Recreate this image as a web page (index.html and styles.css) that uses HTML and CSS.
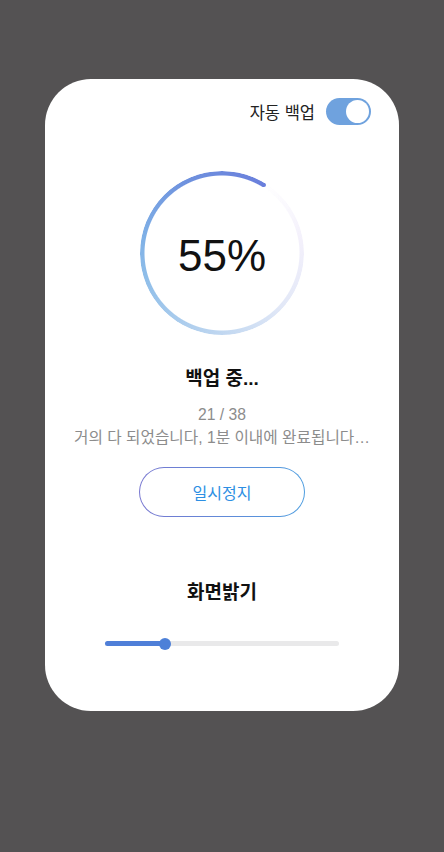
FILE: index.html
```html
<!DOCTYPE html>
<html lang="ko">

<head>
    <meta charset="UTF-8">
    <meta name="viewport" content="width=device-width, initial-scale=1.0">
    <title>백업</title>
    <link rel="stylesheet" href="styles.css">
</head>

<body>
    <div class="card">
        <div class="top">
            <span class="auto">자동 백업</span>
            <div class="switch on"><span class="knob"></span></div>
        </div>
        <div class="ring">
            <div class="track"></div>
            <span class="cap"></span>
            <div class="pct">55%</div>
        </div>
        <h2 class="title">백업 중...</h2>
        <p class="info">21 / 38<br>거의 다 되었습니다, 1분 이내에 완료됩니다…</p>
        <button class="pause">일시정지</button>
        <h2 class="title bright">화면밝기</h2>
        <div class="slider">
            <div class="fill" style="width: 60px"></div>
            <span class="thumb" style="left: 60px"></span>
        </div>
    </div>
</body>

</html>
```

FILE: styles.css
```css
* {
    box-sizing: border-box;
}

body {
    margin: 0;
    min-height: 852px;
    background-color: #545253;
    font-family: "Liberation Sans", "Noto Sans CJK KR", sans-serif;
    padding-top: 79px;
}

.card {
    width: 354px;
    height: 632px;
    margin: 0 auto;
    background-color: #fff;
    border-radius: 46px;
    padding: 19px 28px 0;
    display: flex;
    flex-direction: column;
    align-items: center;
}

.top {
    align-self: stretch;
    display: flex;
    justify-content: flex-end;
    align-items: center;
    gap: 11px;
    height: 27px;
}

.auto {
    font-size: 16.5px;
    color: #222;
}

.switch {
    width: 45px;
    height: 27px;
    border-radius: 14px;
    background-color: #6fa2de;
    position: relative;
}

.switch .knob {
    position: absolute;
    right: 2px;
    top: 2px;
    width: 23px;
    height: 23px;
    border-radius: 50%;
    background-color: #fff;
}

.ring {
    position: relative;
    width: 164px;
    height: 164px;
    margin-top: 46px;
    display: flex;
    align-items: center;
    justify-content: center;
}

.track {
    position: absolute;
    inset: 0;
    border-radius: 50%;
    background: conic-gradient(from 32deg, rgba(255, 255, 255, 0) 0deg, #f3f0fb 50deg, #e2e8f7 100deg, #b8d3ef 160deg, #8fbee9 220deg, #7fb0e6 250deg, #6f92de 300deg, #6a7fdc 360deg);
    -webkit-mask: radial-gradient(circle, transparent 77px, #000 78px);
    mask: radial-gradient(circle, transparent 77px, #000 78px);
}

.cap {
    position: absolute;
    width: 4px;
    height: 4px;
    border-radius: 50%;
    background-color: #6a7fdc;
    left: 122px;
    top: 12px;
}

.pct {
    font-size: 44px;
    color: #111;
    margin-top: 6px;
}

.title {
    margin: 32px 0 0;
    font-size: 19px;
    line-height: 24px;
    font-weight: bold;
    color: #111;
}

.info {
    margin: 12px 0 0;
    font-size: 15.7px;
    line-height: 23px;
    color: #8c8c8c;
    text-align: center;
    white-space: nowrap;
}

.pause {
    margin-top: 18px;
    width: 166px;
    height: 50px;
    border-radius: 25px;
    border: 1.5px solid transparent;
    background: linear-gradient(#fff, #fff) padding-box, linear-gradient(90deg, #7776d0, #4d9de0) border-box;
    font-family: inherit;
    font-size: 16px;
    color: #2d8fe3;
}

.bright {
    margin-top: 64px;
}

.slider {
    position: relative;
    width: 234px;
    height: 5px;
    margin-top: 36px;
    border-radius: 3px;
    background-color: #e9e9ea;
}

.slider .fill {
    height: 5px;
    border-radius: 3px;
    background-color: #4f7fd8;
}

.slider .thumb {
    position: absolute;
    top: -3.5px;
    width: 12px;
    height: 12px;
    margin-left: -6px;
    border-radius: 50%;
    background-color: #4d80d8;
}
```
